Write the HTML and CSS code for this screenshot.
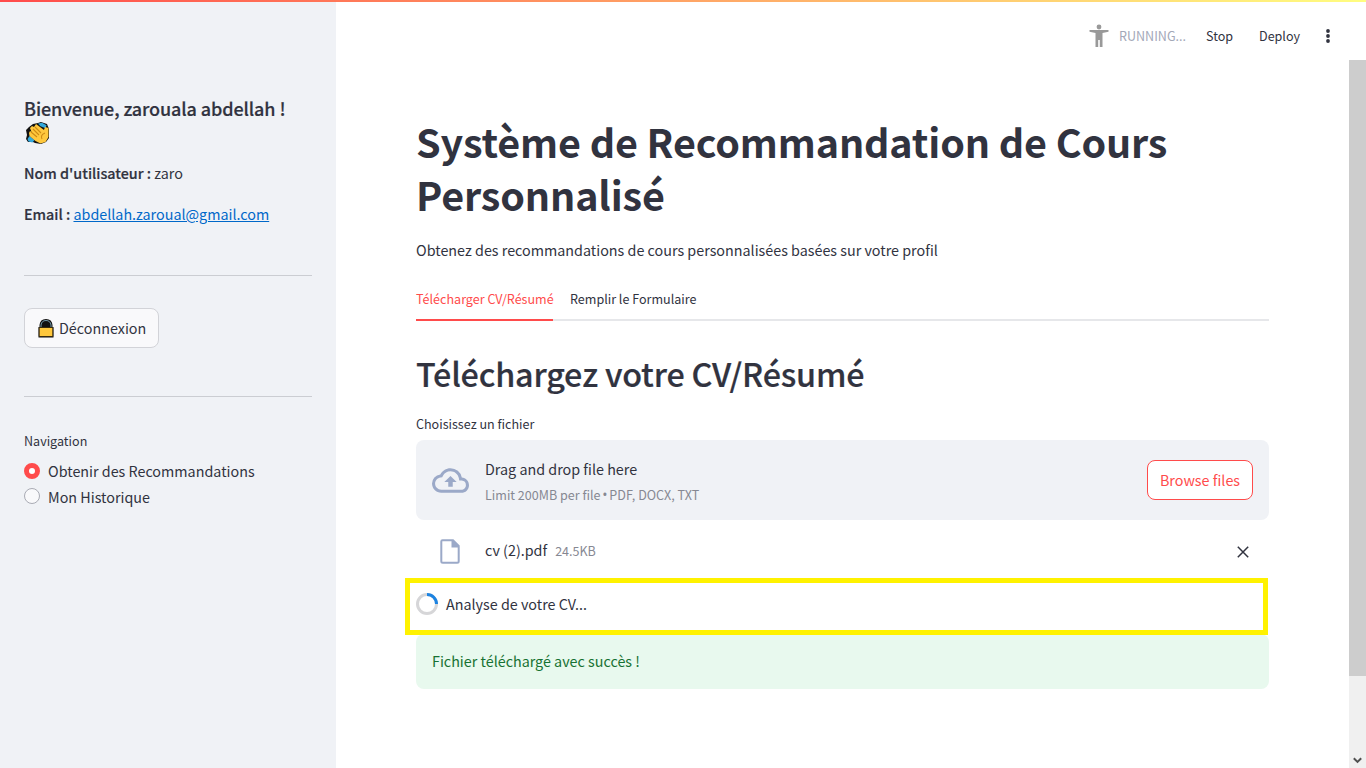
FILE: index.html
```html
<!DOCTYPE html>
<html lang="fr">
<head>
<meta charset="utf-8">
<title>Système de Recommandation de Cours Personnalisé</title>
<link rel="stylesheet" href="styles.css">
</head>
<body>
<div class="app">
  <div class="decoration"></div>
  <aside class="sidebar">
    <h3 class="welcome"><span class="welcome-text">Bienvenue, zarouala abdellah !</span>
      <svg class="clap" viewBox="0 0 24 24"><path d="M3 6l4-3 5-1 3-1 6 2 2 5v9l-3 4-5 2-6-1-2-1-5 0-2-3 1-4-1-5z" fill="#111"/><path d="M12 2.500l4-.8 4.500 2.500-1 3-5-2zM1.500 18l2-3 5 4-2 2.500-4-1z" fill="#33a8db"/><path d="M3 12l1-2 1.500 1L4 7l2-2 2 1 2-3 8 6 1-3 3.500 1v9l-3 5-5 1.500-5-2.500-6-5z" fill="#ffc83d"/><path d="M7 8l6 6M9 6l6 6M5 11l6 5M19 12q-5 2-3 6" fill="none" stroke="#ce8b15" stroke-width="1.1"/></svg>
    </h3>
    <p class="info"><b>Nom d'utilisateur :</b> zaro</p>
    <p class="info"><b>Email :</b> <a class="mail" href="#">abdellah.zaroual@gmail.com</a></p>
    <hr class="rule rule-first">
    <button class="logout">
      <svg class="lock" viewBox="0 0 16 20"><path d="M1.500 9V7q.5-6 6.500-6t6.500 6v2h1v10.500H.5V9z" fill="#111"/><path d="M3 9V7q.7-4.500 5-4.500T13 7v2" fill="none" stroke="#8cbbd0" stroke-width=".8"/><path d="M1.200 9.500h13.600v9H1.200z" fill="#ffc83d" stroke="#241a08" stroke-width=".8"/></svg>
      <span>Déconnexion</span>
    </button>
    <hr class="rule rule-second">
    <div class="nav-label">Navigation</div>
    <div class="radio"><i class="dot dot-on"></i><span>Obtenir des Recommandations</span></div>
    <div class="radio"><i class="dot"></i><span>Mon Historique</span></div>
  </aside>
  <div class="content">
    <header class="toolbar">
      <svg class="runner" viewBox="0 0 20 24" fill="#999"><circle cx="10" cy="3" r="2.400"/><path d="M.5 6h19v1.800L13.500 9v14h-2.700v-7H9.200v7H6.500V9L.5 7.800z"/></svg>
      <span class="running">RUNNING...</span>
      <span class="stop">Stop</span>
      <span class="deploy">Deploy</span>
      <svg class="kebab" viewBox="0 0 4 14" fill="#31333f"><circle cx="2" cy="2" r="1.900"/><circle cx="2" cy="7" r="1.900"/><circle cx="2" cy="12" r="1.900"/></svg>
    </header>
    <div class="scroller">
      <main class="main">
        <h1 class="title">Système de Recommandation de Cours Personnalisé</h1>
        <p class="intro">Obtenez des recommandations de cours personnalisées basées sur votre profil</p>
        <nav class="tabs"><span class="tab tab-on">Télécharger CV/Résumé</span><span class="tab">Remplir le Formulaire</span></nav>
        <h2 class="subtitle">Téléchargez votre CV/Résumé</h2>
        <div class="upload-label">Choisissez un fichier</div>
        <section class="dropzone">
          <svg class="cloud" viewBox="0 0 24 24" fill="#9ba9c8"><path d="M19.350 10.040A7.490 7.490 0 0 0 12 4C9.110 4 6.600 5.640 5.350 8.040A5.994 5.994 0 0 0 0 14c0 3.310 2.690 6 6 6h13c2.760 0 5-2.240 5-5 0-2.640-2.050-4.780-4.650-4.960zM19 18H6c-2.210 0-4-1.790-4-4 0-2.050 1.530-3.760 3.560-3.970l1.070-.11.5-.95A5.469 5.469 0 0 1 12 6c2.620 0 4.880 1.860 5.390 4.430l.3 1.500 1.530.11A2.980 2.980 0 0 1 22 15c0 1.650-1.350 3-3 3zM8 13h2.550v3h2.900v-3H16l-4-4z"/></svg>
          <div class="drop-text"><span class="drop-main">Drag and drop file here</span><span class="small">Limit 200MB per file <span class="bullet">•</span> PDF, DOCX, TXT</span></div>
          <button class="browse">Browse files</button>
        </section>
        <div class="file">
          <svg class="doc" viewBox="0 0 20 25"><path d="M2.500 1.300H13l5.700 5.700v15.200q0 1.500-1.500 1.500H2.800q-1.500 0-1.500-1.500V2.500q0-1.200 1.200-1.200z" fill="none" stroke="#9ba9c8" stroke-width="2"/><path d="M11.500 1H13l6 6v1.500h-7.500z" fill="#9ba9c8"/></svg>
          <span class="file-name">cv (2).pdf</span><span class="small">24.5KB</span>
          <svg class="close" viewBox="0 0 12 12"><path d="M.8.8l10.400 10.400M11.200.8L.8 11.200" stroke="#31333f" stroke-width="1.500"/></svg>
        </div>
        <div class="status">
          <svg class="spinner" viewBox="0 0 22 22" fill="none" stroke-width="3"><circle cx="11" cy="11" r="9.500" stroke="#d6d6d8"/><path d="M11 1.500a9.500 9.500 0 0 1 9.500 9.500" stroke="#1c83e1"/></svg>
          <span>Analyse de votre CV...</span>
          <div class="highlight"></div>
        </div>
        <div class="success">Fichier téléchargé avec succès !</div>
      </main>
      <div class="scrollbar"><div class="thumb"></div><svg class="arrow" viewBox="0 0 9 7"><path d="M.8 1.200l3.700 3.700 3.700-3.700" fill="none" stroke="#505050" stroke-width="2"/></svg></div>
    </div>
  </div>
</div>
</body>
</html>
```
FILE: styles.css
```css
* { box-sizing: border-box; }
body { margin: 0; color: #31333f; background: #fff; font: 14.34px/26px "Noto Sans CJK SC", "Noto Sans", sans-serif; }
h1, h2, h3, p { margin: 0; }
button { font: inherit; color: inherit; padding: 0; }
svg { display: block; flex: none; }
.app { display: flex; width: 1366px; height: 768px; overflow: hidden; position: relative; }
.decoration { position: absolute; top: 0; left: 0; width: 100%; height: 2px; background: linear-gradient(90deg, #ff4b4b, #fffd80); z-index: 2; }
.sidebar { width: 336px; flex: none; background: #f0f2f6; padding: 96px 24px 0; }
.welcome { font-size: 18px; font-weight: 500; line-height: 24px; height: 48px; margin-bottom: 16px; white-space: nowrap; letter-spacing: -.1px; -webkit-text-stroke: .2px #31333f; }
.welcome-text { display: block; }
.clap { width: 24px; height: 24px; margin: 1px 0 0 2px; }
.info { height: 26px; margin-bottom: 15px; white-space: nowrap; }
.info b { font-weight: 500; -webkit-text-stroke: .2px #31333f; }
.mail { color: #0068c9; text-decoration: underline; }
.rule { border: 0; height: 1px; background: #cbcdd2; margin: 0; }
.rule-first { margin: 48px 0 32px; }
.logout { display: flex; align-items: center; width: 135px; height: 40px; padding-left: 13px; gap: 5px; background: #f9f9fb; border: 1px solid #d2d3d8; border-radius: 8px; white-space: nowrap; }
.lock { width: 16px; height: 20px; }
.rule-second { margin: 48px 0 33px; }
.nav-label { font-size: 12.55px; line-height: 22px; margin-bottom: 6px; }
.radio { display: flex; gap: 8px; height: 26px; white-space: nowrap; }
.dot { width: 16px; height: 16px; border: 1px solid #a9abb4; border-radius: 50%; background: #f9f9fb; margin-top: 4px; }
.dot-on { border: 5px solid #ff4b4b; background: #fff; margin-top: 5px; }
.content { flex: 1; display: flex; flex-direction: column; }
.toolbar { height: 60px; flex: none; display: flex; align-items: center; padding: 12px 36px 0 0; justify-content: flex-end; font-size: 12.55px; white-space: nowrap; }
.runner { width: 20px; height: 24px; margin-right: 10px; }
.running { color: #a3a8b8; width: 87px; }
.stop { width: 53px; }
.deploy { width: 67px; }
.kebab { width: 4px; height: 14px; }
.scroller { flex: 1; display: flex; justify-content: space-between; }
.main { width: 933px; padding: 54px 0 0 80px; }
.title { font-size: 39.5px; line-height: 53px; font-weight: 700; margin-bottom: 17px; letter-spacing: -.14px; }
.intro { margin-bottom: 17px; white-space: nowrap; }
.tabs { display: flex; gap: 17px; height: 41px; border-bottom: 2px solid #e6e7ea; font-size: 12.55px; line-height: 37px; white-space: nowrap; }
.tab { height: 41px; }
.tab-on { width: 137px; color: #ff4b4b; border-bottom: 2px solid #ff4b4b; }
.subtitle { font-size: 32.3px; line-height: 43px; font-weight: 500; margin: 31px 0 18px; white-space: nowrap; letter-spacing: -.18px; -webkit-text-stroke: .2px #31333f; }
.upload-label { font-size: 12.55px; line-height: 22px; margin-bottom: 5px; }
.dropzone { height: 80px; display: flex; align-items: center; padding: 0 16px; border-radius: 8px; background: #f0f2f6; white-space: nowrap; }
.cloud { width: 37px; height: 37px; margin-right: 16px; }
.drop-text { flex: 1; display: flex; flex-direction: column; padding-top: 4px; }
.small { font-size: 12.55px; color: #868892; }
.bullet { font-family: "Open Sans", sans-serif; font-size: 14px; line-height: 1; margin: 0 -1px; }
.browse { width: 106px; height: 40px; border: 1px solid #ff4b4b; border-radius: 8px; color: #ff4b4b; background: #fff; }
.file { height: 62px; display: flex; align-items: center; padding: 0 20px 0 24px; white-space: nowrap; }
.doc { width: 20px; height: 25px; margin-right: 25px; }
.file-name { margin-right: 8px; padding-bottom: 2px; }
.close { width: 12px; height: 12px; margin: 1px 0 0 auto; }
.status { position: relative; height: 52px; display: flex; gap: 8px; padding-top: 9px; }
.spinner { width: 22px; height: 22px; margin-top: 2px; }
.highlight { position: absolute; left: -11px; top: -4px; width: 863px; height: 57px; border: 5px solid #fff200; }
.success { height: 55px; padding: 14px 16px; color: #177233; background: #e8f9ee; border-radius: 8px; }
.scrollbar { width: 17px; background: #f0f0f0; display: flex; flex-direction: column; justify-content: space-between; align-items: center; padding-bottom: 4px; }
.thumb { width: 17px; height: 616px; background: #cdcdcd; }
.arrow { width: 9px; height: 7px; }
```
